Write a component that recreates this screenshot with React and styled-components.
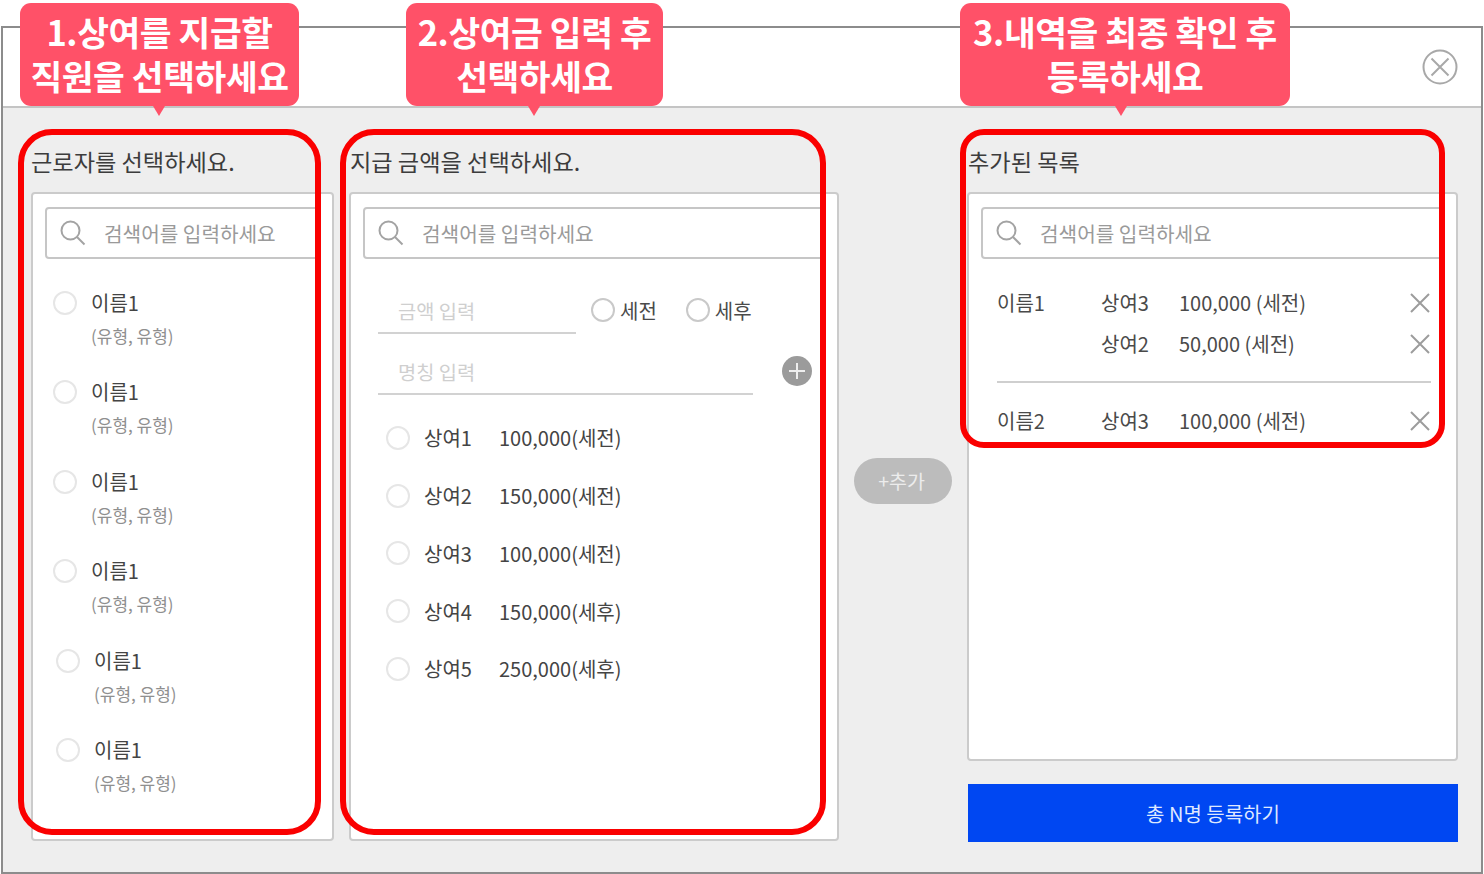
import React from "react";
import styled, { createGlobalStyle } from "styled-components";

const Global = createGlobalStyle`
  html, body { margin: 0; padding: 0; background: #fff; }
  body { font-family: "Noto Sans CJK KR", "Noto Sans", sans-serif; color: #444; }
  * { box-sizing: border-box; }
`;

const Page = styled.div`
  position: relative;
  width: 1484px;
  height: 874px;
  padding: 26px 0 0 1px;
  overflow: hidden;
`;
const Frame = styled.div`
  width: 1482px;
  height: 848px;
  border: 2px solid #8c8c8c;
  background: #eeeeee;
  display: flex;
  flex-direction: column;
`;
const Header = styled.header`
  height: 80px;
  flex: none;
  background: #fff;
  border-bottom: 2px solid #c4c4c4;
  display: flex;
  align-items: center;
  justify-content: flex-end;
  padding: 0 23px 0 0;
`;
const Main = styled.main`
  flex: 1;
  display: flex;
  gap: 15px;
  padding-left: 28px;
`;
const Column = styled.section`
  width: ${(p) => p.$w}px;
  flex: none;
  display: flex;
  flex-direction: column;
`;
const Title = styled.h2`
  height: 84px;
  margin: 0;
  padding: 35px 0 0 ${(p) => p.$indent || 0}px;
  font-size: 23.2px;
  line-height: 36px;
  font-weight: 400;
  color: #3c3c3c;
  white-space: nowrap;
`;
const Panel = styled.div`
  height: ${(p) => p.$h}px;
  background: #fff;
  border: 2px solid #cbcbcb;
  border-radius: 4px;
  padding: 13px 12px 0;
`;
const Search = styled.div`
  height: 52px;
  border: 2px solid #c6c6c6;
  border-radius: 4px;
  display: flex;
  align-items: center;
  padding-left: 13px;
  gap: 18px;
  font-size: 20.2px;
  color: #9a9a9a;
  white-space: nowrap;
  svg { flex: none; }
`;
const NameList = styled.ul`
  list-style: none;
  margin: 30.5px 0 0;
  padding: 0 0 0 8px;
`;
const NameItem = styled.li`
  height: 89.5px;
  display: grid;
  grid-template-columns: 24px 1fr;
  column-gap: 14px;
  grid-template-rows: 26px 26px;
  row-gap: 7px;
  align-content: start;
  align-items: center;
  padding-left: ${(p) => (p.$shift ? 3 : 0)}px;
`;
const Radio = styled.span`
  display: block;
  width: 24px;
  height: 24px;
  border-radius: 50%;
  background: #fff;
  border: 2px solid ${(p) => (p.$strong ? "#c9c9c9" : "#e6e6e6")};
  flex: none;
`;
const Name = styled.span`
  font-size: 20px;
  line-height: 26px;
  color: #444;
`;
const Sub = styled.span`
  grid-column: 2;
  font-size: 17px;
  line-height: 26px;
  color: #8f8f8f;
`;
const Form = styled.div`
  padding: 28px 0 0 15px;
  position: relative;
`;
const FormRow = styled.div`
  display: flex;
  align-items: center;
  gap: 15px;
  height: ${(p) => p.$h}px;
`;
const Field = styled.div`
  width: ${(p) => p.$w}px;
  height: 47px;
  border-bottom: 2px solid #d2d2d2;
  padding-left: 20px;
  font-size: 19.8px;
  line-height: 47px;
  color: #cfcfcf;
  margin-top: ${(p) => p.$mt || 0}px;
`;
const Option = styled.label`
  display: flex;
  align-items: center;
  gap: 5px;
  font-size: 20px;
  color: #4a4a4a;
  margin-right: 14px;
  margin-top: -1px;
`;
const Plus = styled.span`
  position: absolute;
  top: 97px;
  right: 13px;
  width: 30px;
  height: 30px;
  border-radius: 50%;
  background: #9b9b9b;
  display: flex;
  align-items: center;
  justify-content: center;
`;
const BonusList = styled.ul`
  list-style: none;
  margin: 14px 0 0;
  padding: 0 0 0 23px;
`;
const BonusItem = styled.li`
  height: 57.75px;
  display: flex;
  align-items: center;
  font-size: 20px;
  color: #444;
`;
const BonusName = styled.span`
  width: 75px;
  margin-left: 14px;
`;
const Middle = styled.div`
  width: 98px;
  flex: none;
  padding-top: 350px;
`;
const AddButton = styled.button`
  width: 98px;
  height: 46px;
  border: 0;
  border-radius: 23px;
  background: #bcbcbc;
  color: #ececec;
  font: 400 19.5px/42px "Noto Sans CJK KR", "Noto Sans", sans-serif;
  padding: 0 3px 0 0;
`;
const Added = styled.div`
  padding: 23px 0 0 16px;
  width: 450px;
`;
const AddedRow = styled.div`
  display: grid;
  grid-template-columns: 104px 78px 1fr 22px;
  align-items: center;
  height: 41px;
  font-size: 20px;
  color: #4a4a4a;
  white-space: nowrap;
`;
const Divider = styled.hr`
  margin: 17px 0 17px;
  height: 2px;
  border: 0;
  background: #cfcfcf;
  width: 434px;
`;
const Submit = styled.button`
  margin: 23px 0 0 1px;
  width: 490px;
  height: 58px;
  border: 0;
  background: #0047f2;
  color: #dfe8ff;
  font: 400 20px "Noto Sans CJK KR", "Noto Sans", sans-serif;
  padding: 0;
`;
const Callout = styled.div`
  position: absolute;
  top: 3px;
  left: ${(p) => p.$x}px;
  width: ${(p) => p.$w}px;
  height: 103px;
  border-radius: 11px;
  background: #ff5168;
  color: #fff;
  font-size: 34.5px;
  line-height: 44px;
  font-weight: 700;
  text-align: center;
  padding-top: 6px;
  letter-spacing: -0.4px;
  white-space: nowrap;
  &::after {
    content: "";
    position: absolute;
    top: 100%;
    left: ${(p) => p.$arrow}px;
    border: 6px solid transparent;
    border-top: 10px solid #ff5168;
    border-bottom: 0;
  }
`;
const Highlight = styled.div`
  position: absolute;
  left: ${(p) => p.$x}px;
  top: 129px;
  width: ${(p) => p.$w}px;
  height: ${(p) => p.$h}px;
  border: 6px solid #fa0000;
  border-radius: ${(p) => p.$r}px;
  pointer-events: none;
`;

const SearchIcon = () => (
  <svg width="26" height="26" viewBox="0 0 26 26" fill="none" stroke="#a3a3a3" strokeWidth="2">
    <circle cx="10.5" cy="10.5" r="9" />
    <path d="M17 17l7.5 7.5" />
  </svg>
);
const CloseX = () => (
  <svg width="22" height="22" viewBox="0 0 22 22" fill="none" stroke="#9c9c9c" strokeWidth="2">
    <path d="M2 2l18 18M20 2L2 20" />
  </svg>
);
const CloseCircle = () => (
  <svg width="36" height="36" viewBox="0 0 36 36" fill="none" stroke="#a8a8a8" strokeWidth="2">
    <circle cx="18" cy="18" r="16.5" />
    <path d="M9.5 9.5l17 17M26.5 9.5l-17 17" />
  </svg>
);

const SearchBox = () => (
  <Search>
    <SearchIcon />
    검색어를 입력하세요
  </Search>
);

const names = [0, 0, 0, 0, 1, 1];
const bonuses = [
  ["상여1", "100,000(세전)"],
  ["상여2", "150,000(세전)"],
  ["상여3", "100,000(세전)"],
  ["상여4", "150,000(세후)"],
  ["상여5", "250,000(세후)"],
];

export default function App() {
  return (
    <Page>
      <Global />
      <Frame>
        <Header>
          <CloseCircle />
        </Header>
        <Main>
          <Column $w={303}>
            <Title>근로자를 선택하세요.</Title>
            <Panel $h={649}>
              <SearchBox />
              <NameList>
                {names.map((s, i) => (
                  <NameItem key={i} $shift={s}>
                    <Radio />
                    <Name>이름1</Name>
                    <Sub>(유형, 유형)</Sub>
                  </NameItem>
                ))}
              </NameList>
            </Panel>
          </Column>
          <Column $w={490}>
            <Title $indent={1}>지급 금액을 선택하세요.</Title>
            <Panel $h={649}>
              <SearchBox />
              <Form>
                <FormRow $h={47}>
                  <Field $w={198}>금액 입력</Field>
                  <Option><Radio $strong />세전</Option>
                  <Option><Radio $strong />세후</Option>
                </FormRow>
                <Field $w={375} $mt={14}>명칭 입력</Field>
                <Plus>
                  <svg width="18" height="18" viewBox="0 0 18 18" stroke="#eee" strokeWidth="2">
                    <path d="M9 1v16M1 9h16" />
                  </svg>
                </Plus>
              </Form>
              <BonusList>
                {bonuses.map(([n, a]) => (
                  <BonusItem key={n}>
                    <Radio />
                    <BonusName>{n}</BonusName>
                    {a}
                  </BonusItem>
                ))}
              </BonusList>
            </Panel>
          </Column>
          <Middle>
            <AddButton>+추가</AddButton>
          </Middle>
          <Column $w={491}>
            <Title $indent={1}>추가된 목록</Title>
            <Panel $h={569}>
              <SearchBox />
              <Added>
                <AddedRow>
                  <span>이름1</span><span>상여3</span><span>100,000 (세전)</span><CloseX />
                </AddedRow>
                <AddedRow>
                  <span /><span>상여2</span><span>50,000 (세전)</span><CloseX />
                </AddedRow>
                <Divider />
                <AddedRow>
                  <span>이름2</span><span>상여3</span><span>100,000 (세전)</span><CloseX />
                </AddedRow>
              </Added>
            </Panel>
            <Submit>총 N명 등록하기</Submit>
          </Column>
        </Main>
      </Frame>
      <Callout $x={20} $w={279} $arrow={133}>1.상여를 지급할<br />직원을 선택하세요</Callout>
      <Callout $x={406} $w={257} $arrow={122}>2.상여금 입력 후<br />선택하세요</Callout>
      <Callout $x={960} $w={330} $arrow={155}>3.내역을 최종 확인 후<br />등록하세요</Callout>
      <Highlight $x={18} $w={303} $h={706} $r={34} />
      <Highlight $x={340} $w={486} $h={706} $r={34} />
      <Highlight $x={960} $w={485} $h={319} $r={24} />
    </Page>
  );
}
